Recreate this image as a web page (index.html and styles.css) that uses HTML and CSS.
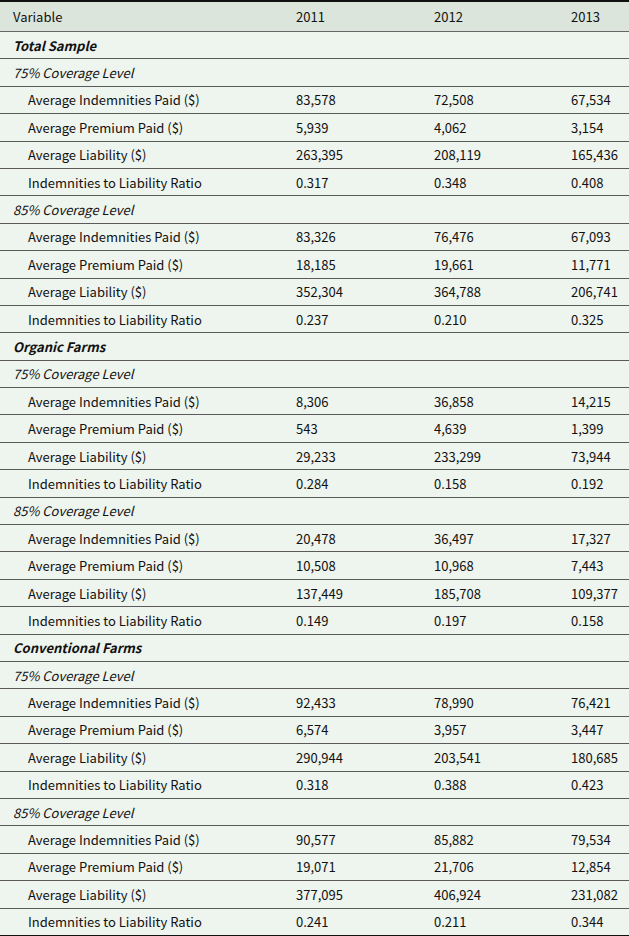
FILE: index.html
```html
<!DOCTYPE html>
<html>
<head>
<meta charset="utf-8">
<link rel="stylesheet" href="styles.css">
</head>
<body>
<table class="data">
<colgroup><col class="c1"><col class="c2"><col class="c3"><col class="c4"></colgroup>
<thead>
<tr><th>Variable</th><th>2011</th><th>2012</th><th>2013</th></tr>
</thead>
<tbody>
<tr class="group"><td colspan="4">Total Sample</td></tr>
<tr class="sub"><td colspan="4">75% Coverage Level</td></tr>
<tr><td class="ind">Average Indemnities Paid ($)</td><td>83,578</td><td>72,508</td><td>67,534</td></tr>
<tr><td class="ind">Average Premium Paid ($)</td><td>5,939</td><td>4,062</td><td>3,154</td></tr>
<tr><td class="ind">Average Liability ($)</td><td>263,395</td><td>208,119</td><td>165,436</td></tr>
<tr><td class="ind">Indemnities to Liability Ratio</td><td>0.317</td><td>0.348</td><td>0.408</td></tr>
<tr class="sub"><td colspan="4">85% Coverage Level</td></tr>
<tr><td class="ind">Average Indemnities Paid ($)</td><td>83,326</td><td>76,476</td><td>67,093</td></tr>
<tr><td class="ind">Average Premium Paid ($)</td><td>18,185</td><td>19,661</td><td>11,771</td></tr>
<tr><td class="ind">Average Liability ($)</td><td>352,304</td><td>364,788</td><td>206,741</td></tr>
<tr><td class="ind">Indemnities to Liability Ratio</td><td>0.237</td><td>0.210</td><td>0.325</td></tr>
<tr class="group"><td colspan="4">Organic Farms</td></tr>
<tr class="sub"><td colspan="4">75% Coverage Level</td></tr>
<tr><td class="ind">Average Indemnities Paid ($)</td><td>8,306</td><td>36,858</td><td>14,215</td></tr>
<tr><td class="ind">Average Premium Paid ($)</td><td>543</td><td>4,639</td><td>1,399</td></tr>
<tr><td class="ind">Average Liability ($)</td><td>29,233</td><td>233,299</td><td>73,944</td></tr>
<tr><td class="ind">Indemnities to Liability Ratio</td><td>0.284</td><td>0.158</td><td>0.192</td></tr>
<tr class="sub"><td colspan="4">85% Coverage Level</td></tr>
<tr><td class="ind">Average Indemnities Paid ($)</td><td>20,478</td><td>36,497</td><td>17,327</td></tr>
<tr><td class="ind">Average Premium Paid ($)</td><td>10,508</td><td>10,968</td><td>7,443</td></tr>
<tr><td class="ind">Average Liability ($)</td><td>137,449</td><td>185,708</td><td>109,377</td></tr>
<tr><td class="ind">Indemnities to Liability Ratio</td><td>0.149</td><td>0.197</td><td>0.158</td></tr>
<tr class="group"><td colspan="4">Conventional Farms</td></tr>
<tr class="sub"><td colspan="4">75% Coverage Level</td></tr>
<tr><td class="ind">Average Indemnities Paid ($)</td><td>92,433</td><td>78,990</td><td>76,421</td></tr>
<tr><td class="ind">Average Premium Paid ($)</td><td>6,574</td><td>3,957</td><td>3,447</td></tr>
<tr><td class="ind">Average Liability ($)</td><td>290,944</td><td>203,541</td><td>180,685</td></tr>
<tr><td class="ind">Indemnities to Liability Ratio</td><td>0.318</td><td>0.388</td><td>0.423</td></tr>
<tr class="sub"><td colspan="4">85% Coverage Level</td></tr>
<tr><td class="ind">Average Indemnities Paid ($)</td><td>90,577</td><td>85,882</td><td>79,534</td></tr>
<tr><td class="ind">Average Premium Paid ($)</td><td>19,071</td><td>21,706</td><td>12,854</td></tr>
<tr><td class="ind">Average Liability ($)</td><td>377,095</td><td>406,924</td><td>231,082</td></tr>
<tr><td class="ind">Indemnities to Liability Ratio</td><td>0.241</td><td>0.211</td><td>0.344</td></tr>
</tbody>
</table>
</body>
</html>
```
FILE: styles.css
```css
html, body {
  margin: 0;
  padding: 0;
  background: #eef4ee;
}
body {
  font-family: "Noto Sans CJK KR", "Noto Sans", sans-serif;
  font-size: 13px;
  color: #111;
}
.data {
  width: 629px;
  border-collapse: collapse;
  table-layout: fixed;
  border-top: 2px solid #111;
}
.c1 { width: 296px; }
.c2 { width: 138px; }
.c3 { width: 137px; }
.c4 { width: 58px; }
.data th {
  background: #dce5db;
  font-weight: normal;
  text-align: left;
  height: 29px;
  padding: 0;
  border-bottom: 1px solid #666;
}
.data th:first-child {
  padding-left: 13px;
}
.data td {
  height: 26.4px;
  padding: 0;
  border-bottom: 1px solid #5a5a5a;
  white-space: nowrap;
}
.data td:first-child {
  padding-left: 13px;
}
.data td.ind {
  padding-left: 28px;
}
.group td {
  font-weight: bold;
  font-style: italic;
}
.sub td {
  font-style: italic;
}
.data tbody tr:last-child td {
  border-bottom: 1px solid #111;
}
```
